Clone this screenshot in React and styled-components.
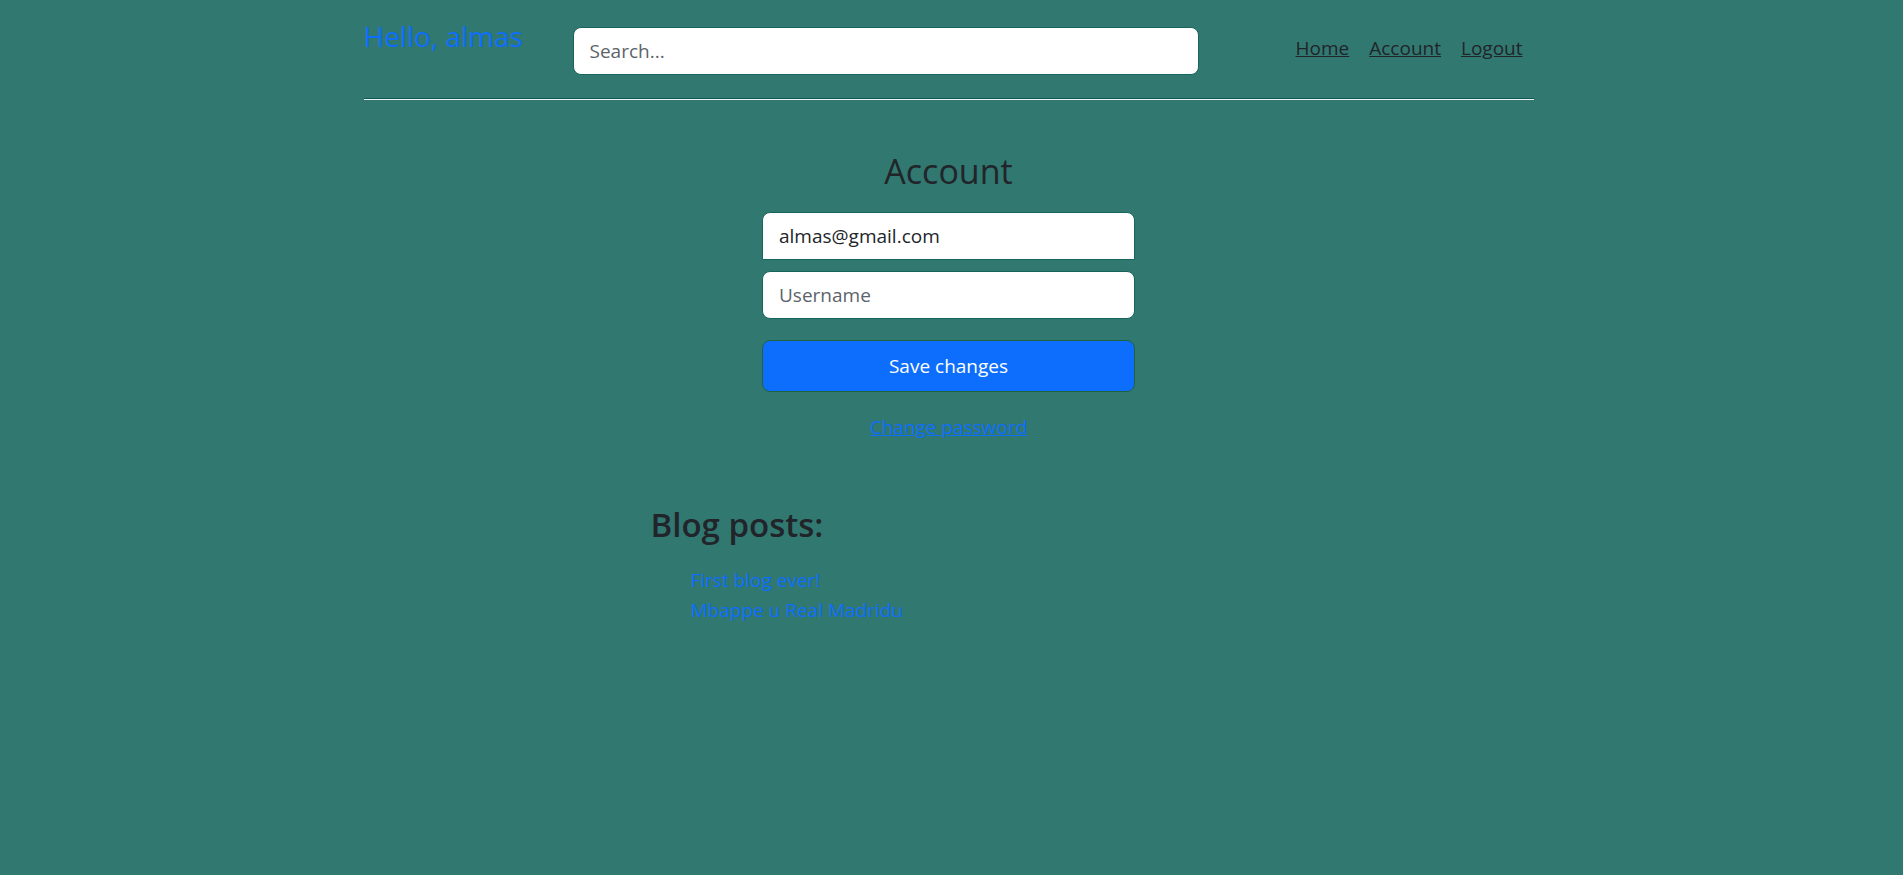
import styled, { createGlobalStyle } from "styled-components";

const GlobalStyle = createGlobalStyle`
  html, body {
    margin: 0;
    padding: 0;
    background: #317871;
  }
  body {
    font-family: "Open Sans", "Noto Sans", sans-serif;
    color: #212529;
  }
  * {
    box-sizing: border-box;
  }
`;

const Page = styled.div`
  min-height: 875px;
  padding-right: 6px;
`;

const Container = styled.div`
  width: 1170px;
  margin: 0 auto;
`;

const Header = styled.header`
  display: grid;
  grid-template-columns: 209px 626px 1fr;
  align-items: start;
  height: 98px;
  padding-top: 16px;
`;

const Greeting = styled.a`
  margin-top: 4px;
  font-size: 28px;
  line-height: 1.2;
  color: #0d6efd;
  text-decoration: none;
`;

const Input = styled.input`
  width: 100%;
  height: 48px;
  padding: 0 16px;
  font-family: inherit;
  font-size: 19px;
  color: #212529;
  background: #fff;
  border: 1px solid #16655d;
  border-radius: ${(p) => (p.$flatBottom ? "8px 8px 0 0" : "8px")};
  outline: none;

  &::placeholder {
    color: #5c636a;
  }
`;

const SearchInput = styled(Input)`
  margin-top: 11px;
`;

const Nav = styled.nav`
  display: flex;
  justify-content: flex-end;
  gap: 20px;
  margin-top: 17px;
  padding-right: 11px;
`;

const NavLink = styled.a`
  font-size: 19px;
  line-height: 30px;
  color: #212529;
  text-decoration: underline;
`;

const Rule = styled.hr`
  margin: 0;
  height: 0;
  border: 0;
  border-top: 1px solid #0b5a52;
  border-bottom: 1px solid #eef3f2;
`;

const Main = styled.main`
  display: flex;
  flex-direction: column;
  align-items: center;
`;

const Title = styled.h1`
  margin: 51px 0 20px;
  font-size: 34px;
  font-weight: 400;
  line-height: 1.2;
`;

const Form = styled.form`
  width: 373px;
  display: flex;
  flex-direction: column;
  align-items: center;
`;

const UsernameInput = styled(Input)`
  margin-top: 11px;
`;

const SaveButton = styled.button`
  width: 100%;
  height: 52px;
  margin-top: 21px;
  font-family: inherit;
  font-size: 19px;
  color: #fff;
  background: #0d6efd;
  border: 1px solid #22633f;
  border-radius: 8px;
  cursor: pointer;
`;

const ChangeLink = styled.a`
  margin-top: 20px;
  font-size: 19px;
  line-height: 30px;
  color: #0d6efd;
  text-decoration: underline;
`;

const Blog = styled.section`
  width: 596px;
  margin: 63px auto 0;
`;

const BlogTitle = styled.h2`
  margin: 0 0 21px;
  font-size: 33px;
  font-weight: 600;
  line-height: 1.2;
`;

const PostList = styled.ul`
  margin: 0;
  padding-left: 40px;
  list-style: none;
`;

const PostLink = styled.a`
  font-size: 19px;
  line-height: 30px;
  color: #0d6efd;
  text-decoration: none;
`;

const posts = ["First blog ever!", "Mbappe u Real Madridu"];

export default function App() {
  return (
    <Page>
      <GlobalStyle />
      <Container>
        <Header>
          <Greeting href="#">Hello, almas</Greeting>
          <SearchInput type="text" placeholder="Search..." />
          <Nav>
            <NavLink href="#">Home</NavLink>
            <NavLink href="#">Account</NavLink>
            <NavLink href="#">Logout</NavLink>
          </Nav>
        </Header>
        <Rule />
        <Main>
          <Title>Account</Title>
          <Form onSubmit={(e) => e.preventDefault()}>
            <Input type="email" defaultValue="almas@gmail.com" $flatBottom />
            <UsernameInput type="text" placeholder="Username" />
            <SaveButton type="submit">Save changes</SaveButton>
            <ChangeLink href="#">Change password</ChangeLink>
          </Form>
        </Main>
        <Blog>
          <BlogTitle>Blog posts:</BlogTitle>
          <PostList>
            {posts.map((title) => (
              <li key={title}>
                <PostLink href="#">{title}</PostLink>
              </li>
            ))}
          </PostList>
        </Blog>
      </Container>
    </Page>
  );
}
